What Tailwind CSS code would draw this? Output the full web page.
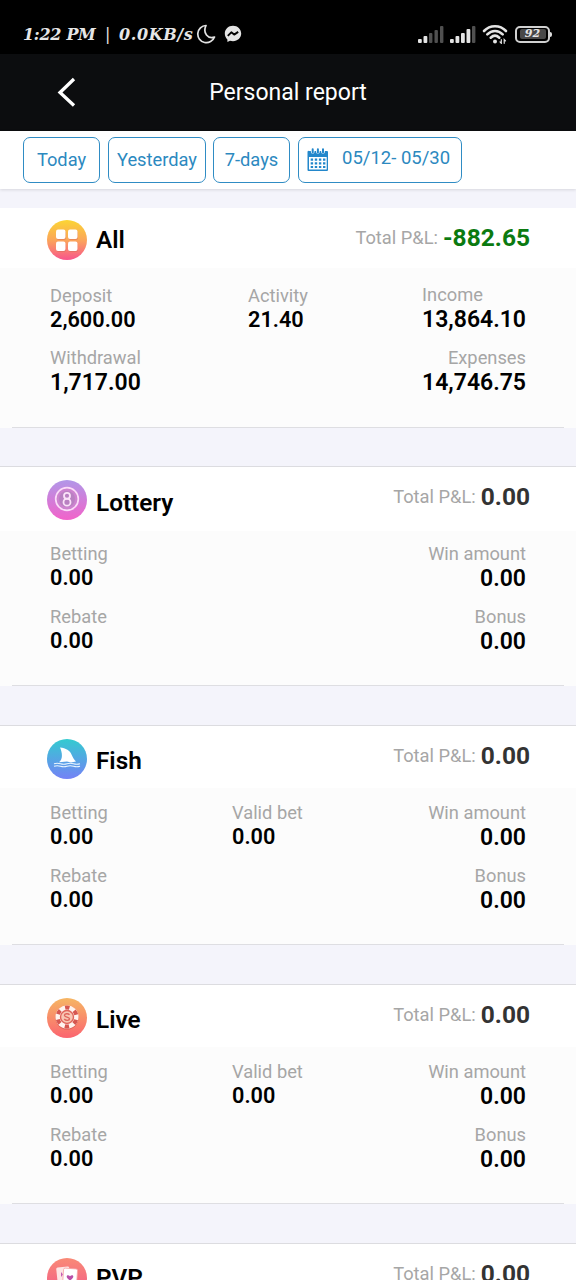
<!DOCTYPE html>
<html lang="en">
<head>
<meta charset="utf-8">
<title>Personal report</title>
<script src="https://cdn.jsdelivr.net/npm/@tailwindcss/browser@4"></script>
</head>
<body class="h-[1280px] w-[576px] overflow-hidden bg-[#f4f4fb] font-['Roboto',sans-serif] text-black">
<div class="flex h-[1280px] flex-col overflow-hidden">

<!-- Status bar -->
<div class="flex h-[54px] shrink-0 items-start bg-black pt-[21px] text-[#e6e6e6]">
  <div class="flex h-[26px] w-full items-center pl-[23px] pr-6">
    <span class="flex w-[172px] items-center whitespace-nowrap pt-px font-['DejaVu_Serif',serif] text-[16px] font-bold italic"><span class="w-[82px] tracking-[-0.300px]">1:22 PM</span><span class="w-[14px] font-normal not-italic">|</span><span class="tracking-[0.600px]">0.0KB/s</span></span>
    <svg class="ml-px" width="20" height="20" viewBox="0 0 20 20" fill="none" stroke="#e2e2e2" stroke-width="1.7" stroke-linejoin="round"><path d="M10 1.5A8.6 8.6 0 1 0 18.5 13C12 15.300 6.500 9 10 1.500Z"/></svg>
    <svg class="ml-[8px]" width="18" height="18" viewBox="0 0 18 18"><path fill="#e4e4e4" d="M9 .8C4.300.8.800 4.200.800 8.600c0 2.400 1 4.400 2.600 5.800v2.700l2.600-1.300c1 .3 2 .4 3 .4 4.700 0 8.200-3.200 8.200-7.600S13.700.8 9 .8Z"/><path fill="none" stroke="#000" stroke-width="1.900" stroke-linejoin="round" d="M3.800 10.800 7.300 7.300 10.200 9.600 14.200 6.900"/></svg>
    <div class="ml-auto flex items-center">
      <svg width="26" height="17" viewBox="0 0 26 17"><g fill="#e4e4e4"><rect x="0" y="13" width="3.800" height="4" rx="1"/><rect x="5.500" y="10" width="3.800" height="7" rx="1"/></g><g fill="#505050"><rect x="11" y="7" width="3.400" height="10" rx="1"/><rect x="16.500" y="4" width="3.400" height="13" rx="1"/><rect x="22" y="0" width="3.400" height="17" rx="1"/></g></svg>
      <svg class="ml-[6px]" width="26" height="17" viewBox="0 0 26 17"><g fill="#e4e4e4"><rect x="0" y="13" width="3.800" height="4" rx="1"/><rect x="5.500" y="10" width="3.800" height="7" rx="1"/><rect x="11" y="7" width="3.800" height="10" rx="1"/><rect x="16.500" y="3" width="3.800" height="14" rx="1"/></g><rect x="22" y="0" width="3.400" height="17" rx="1" fill="#505050"/></svg>
      <svg class="mb-px ml-[6px] mr-px" width="26" height="20" viewBox="0 0 26 20" fill="none" stroke="#e4e4e4" stroke-width="2.600" stroke-linecap="round"><path d="M2 7C8 .6 18 .6 24 7"/><path d="M5.300 10.400C9.800 5.800 16.200 5.800 20.700 10.400"/><path d="M8.700 13.700C11.300 11.300 14.700 11.300 17.300 13.700"/><circle cx="13" cy="17.500" r="2" fill="#e4e4e4" stroke="none"/><path stroke-width="1.200" d="M19.300 15.500v3.800l-1.300-1.400M22.200 19.300v-3.800l1.300 1.400"/></svg>
      <div class="ml-[6px] flex h-[17px] w-[35px] items-center justify-center rounded-[5px] border-2 border-solid border-[#d0d0d0]">
        <span class="flex h-[10px] w-[26px] items-center justify-center rounded-[2px] bg-[#484848] font-['DejaVu_Serif',serif] text-[11px] font-bold italic leading-[10px]">92</span>
      </div>
      <span class="h-[5px] w-[2px] rounded-r-sm bg-[#dedede]"></span>
    </div>
  </div>
</div>

<!-- Title bar -->
<div class="grid h-[77px] shrink-0 grid-cols-[1fr_auto_1fr] items-center bg-[#0c0d0f] text-white">
  <svg class="mb-[2px] ml-[56px]" width="20" height="30" viewBox="0 0 20 30" fill="none" stroke="#fff" stroke-width="3.300"><path d="M18 2 4 15.500 18 28.500"/></svg>
  <h1 class="whitespace-nowrap pt-[2px] text-[23px]">Personal report</h1>
</div>

<!-- Date filters -->
<div class="z-10 flex h-[58px] shrink-0 gap-2 bg-white pl-[23px] pt-[6px] text-[18.300px] text-[#2c89bf] shadow-[0_1px_3px_rgba(0,0,0,0.12)]">
  <button class="h-[46px] w-[77px] rounded-[7px] border border-[#2f8cc4]">Today</button>
  <button class="h-[46px] w-[98px] rounded-[7px] border border-[#2f8cc4]">Yesterday</button>
  <button class="-ml-px h-[46px] w-[77px] rounded-[7px] border border-[#2f8cc4]">7-days</button>
  <button class="flex h-[46px] w-[164px] items-center rounded-[7px] border border-[#2f8cc4] pl-[8px]">
    <svg class="mb-px" width="22" height="23" viewBox="0 0 22 23"><path fill="#2387cb" d="M2 3H20a1 1 0 0 1 1 1V22a1 1 0 0 1-1 1H1.500a1 1 0 0 1-1-1V4A1 1 0 0 1 2 3Z"/><path fill="#fff" d="M2 9H19.700V21.500H2Z"/><path stroke="#fff" stroke-width="3.600" stroke-linecap="round" d="M5.700 2V4M10.900 2V4M16 2V4"/><path stroke="#2387cb" stroke-width="2" stroke-linecap="round" d="M5.700 1.200V4.500M10.900 1.200V4.500M16 1.200V4.500"/><path stroke="#2387cb" stroke-width="2.200" stroke-dasharray="2.400 1.700" d="M3.700 11.600H19M3.700 15.300H19M3.700 19H19"/></svg>
    <span class="ml-[13px] whitespace-nowrap pb-[2px] text-[18.500px]">05/12- 05/30</span>
  </button>
</div>

<!-- All -->
<section class="mt-[19px] flex h-[220px] shrink-0 flex-col bg-[#fcfcfc]">
  <header class="flex h-[60px] items-start bg-white pl-[47px] pr-[46px]">
    <svg class="mt-[12px]" width="40" height="40" viewBox="0 0 40 40"><defs><linearGradient id="gAll" x2="0" y2="1"><stop stop-color="#fbd534"/><stop offset=".5" stop-color="#fba65a"/><stop offset="1" stop-color="#f8558c"/></linearGradient></defs><circle cx="20" cy="20" r="20" fill="url(#gAll)"/><g fill="#d96c5c" opacity=".5"><rect x="9.500" y="10.500" width="9.500" height="9.500" rx="2"/><rect x="21.500" y="10.500" width="9.500" height="9.500" rx="2"/><rect x="9.500" y="22.500" width="9.500" height="9.500" rx="2"/><rect x="21.500" y="22.500" width="9.500" height="9.500" rx="2"/></g><g fill="#fff"><rect x="9" y="9.500" width="9.500" height="9.500" rx="2"/><rect x="21" y="9.500" width="9.500" height="9.500" rx="2"/><rect x="9" y="21.500" width="9.500" height="9.500" rx="2"/><rect x="21" y="21.500" width="9.500" height="9.500" rx="2"/></g></svg>
    <h2 class="ml-[9px] mt-[16px] text-[24.300px] font-semibold leading-[32px]">All</h2>
    <p class="ml-auto mt-[14px] flex gap-[5px] whitespace-nowrap text-[18.300px] leading-[32px] text-[#a6a6a6]">Total P&amp;L: <b class="text-[24.500px] font-bold text-[#0b7a10]">-882.65</b></p>
  </header>
  <div class="mx-3 grid h-[160px] grid-cols-[198px_1fr_auto] grid-rows-[63px_63px] border-b border-[#dedee2] px-[38px] pt-[16px]">
    <div><p class="text-[18.300px] leading-[24px] text-[#a6a6a6]">Deposit</p><p class="text-[21.700px] font-semibold leading-[24px]">2,600.00</p></div>
    <div><p class="text-[18.300px] leading-[24px] text-[#a6a6a6]">Activity</p><p class="text-[21.700px] font-semibold leading-[24px]">21.40</p></div>
    <div><p class="text-[18.300px] leading-[22px] text-[#a6a6a6]">Income</p><p class="pt-[2px] text-[23px] font-semibold leading-[24px]">13,864.10</p></div>
    <div class="col-span-2"><p class="text-[18.300px] leading-[22px] text-[#a6a6a6]">Withdrawal</p><p class="pt-[2px] text-[23px] font-semibold leading-[24px]">1,717.00</p></div>
    <div class="text-right"><p class="text-[18.300px] leading-[22px] text-[#a6a6a6]">Expenses</p><p class="pt-[2px] text-[23px] font-semibold leading-[24px]">14,746.75</p></div>
  </div>
</section>

<!-- Lottery -->
<section class="mt-[38px] flex h-[220px] shrink-0 flex-col border-t border-[#dcdce0] bg-[#fcfcfc]">
  <header class="flex h-[64px] items-start bg-white pl-[47px] pr-[46px]">
    <svg class="mt-[13px]" width="40" height="40" viewBox="0 0 40 40"><defs><linearGradient id="gLot" x2="0" y2="1"><stop stop-color="#b197e8"/><stop offset="1" stop-color="#f263ca"/></linearGradient></defs><circle cx="20" cy="20" r="20" fill="url(#gLot)"/><circle cx="20" cy="19" r="11.300" fill="#cd83cf" stroke="#fbdcf8" stroke-width="1.700"/><circle cx="20" cy="19" r="8" fill="#b981c2"/><g fill="none" stroke="#fbe3f8" stroke-width="1.800"><circle cx="20" cy="15.800" r="3"/><circle cx="20" cy="22.200" r="3.500"/></g></svg>
    <h2 class="ml-[9px] mt-[20px] text-[24.300px] font-semibold leading-[32px]">Lottery</h2>
    <p class="ml-auto mt-[14px] flex gap-[5px] whitespace-nowrap text-[18.300px] leading-[32px] text-[#a6a6a6]">Total P&amp;L: <b class="text-[24.500px] font-bold text-[#333]">0.00</b></p>
  </header>
  <div class="mx-3 grid h-[155px] grid-cols-[182px_1fr_auto] grid-rows-[63px_63px] border-b border-[#dedee2] px-[38px] pt-[11px]">
    <div class="col-span-2"><p class="text-[18.300px] leading-[24px] text-[#a6a6a6]">Betting</p><p class="text-[21.700px] font-semibold leading-[24px]">0.00</p></div>
    <div class="text-right"><p class="text-[18.300px] leading-[24px] text-[#a6a6a6]">Win amount</p><p class="pt-px text-[23px] font-semibold leading-[24px]">0.00</p></div>
    <div class="col-span-2"><p class="text-[18.300px] leading-[24px] text-[#a6a6a6]">Rebate</p><p class="text-[21.700px] font-semibold leading-[24px]">0.00</p></div>
    <div class="text-right"><p class="text-[18.300px] leading-[24px] text-[#a6a6a6]">Bonus</p><p class="pt-px text-[23px] font-semibold leading-[24px]">0.00</p></div>
  </div>
</section>

<!-- Fish -->
<section class="mt-[39px] flex h-[220px] shrink-0 flex-col border-t border-[#dcdce0] bg-[#fcfcfc]">
  <header class="flex h-[62px] items-start bg-white pl-[47px] pr-[46px]">
    <svg class="mt-[13px]" width="40" height="40" viewBox="0 0 40 40"><defs><linearGradient id="gFish" x2="0" y2="1"><stop stop-color="#33cbd0"/><stop offset="1" stop-color="#7582f6"/></linearGradient></defs><circle cx="20" cy="20" r="20" fill="url(#gFish)"/><path fill="#fff" d="M13 8.500C19 9 23 11.500 24.500 15.500 25.500 18 27 20.500 29 22.600L24 23.600 20 22.600 12 23.300C16 20.500 15.500 14 13 8.500Z"/><path d="M7 24.800q3.200-1 6.500 0t6.500 0 6.500 0 6.500 0M7 27.300q3.200-1 6.500 0t6.500 0 6.500 0 6.500 0" fill="none" stroke="#e9f6ff" stroke-width="1.100"/></svg>
    <h2 class="ml-[9px] mt-[19px] text-[24.300px] font-semibold leading-[32px]">Fish</h2>
    <p class="ml-auto mt-[14px] flex gap-[5px] whitespace-nowrap text-[18.300px] leading-[32px] text-[#a6a6a6]">Total P&amp;L: <b class="text-[24.500px] font-bold text-[#333]">0.00</b></p>
  </header>
  <div class="mx-3 grid h-[157px] grid-cols-[182px_1fr_auto] grid-rows-[63px_63px] border-b border-[#dedee2] px-[38px] pt-[13px]">
    <div><p class="text-[18.300px] leading-[24px] text-[#a6a6a6]">Betting</p><p class="text-[21.700px] font-semibold leading-[24px]">0.00</p></div>
    <div><p class="text-[18.300px] leading-[24px] text-[#a6a6a6]">Valid bet</p><p class="text-[21.700px] font-semibold leading-[24px]">0.00</p></div>
    <div class="text-right"><p class="text-[18.300px] leading-[24px] text-[#a6a6a6]">Win amount</p><p class="pt-px text-[23px] font-semibold leading-[24px]">0.00</p></div>
    <div class="col-span-2"><p class="text-[18.300px] leading-[24px] text-[#a6a6a6]">Rebate</p><p class="text-[21.700px] font-semibold leading-[24px]">0.00</p></div>
    <div class="text-right"><p class="text-[18.300px] leading-[24px] text-[#a6a6a6]">Bonus</p><p class="pt-px text-[23px] font-semibold leading-[24px]">0.00</p></div>
  </div>
</section>

<!-- Live -->
<section class="mt-[39px] flex h-[220px] shrink-0 flex-col border-t border-[#dcdce0] bg-[#fcfcfc]">
  <header class="flex h-[62px] items-start bg-white pl-[47px] pr-[46px]">
    <svg class="mt-[13px]" width="40" height="40" viewBox="0 0 40 40"><defs><linearGradient id="gLive" x2="0" y2="1"><stop stop-color="#f6b664"/><stop offset="1" stop-color="#fb6470"/></linearGradient></defs><circle cx="20" cy="20" r="20" fill="url(#gLive)"/><circle cx="20" cy="20" r="11.500" fill="#c9544c" opacity=".6"/><circle cx="20" cy="19" r="11.500" fill="#fff3ee"/><circle cx="20" cy="19" r="9.500" fill="none" stroke="#d65750" stroke-width="4" stroke-dasharray="4.400 5.548" stroke-dashoffset="-2.770"/><circle cx="20" cy="19" r="6.500" fill="#f8c7b4" stroke="#df655b" stroke-width="1.400"/><path fill="none" stroke="#df655b" stroke-width="1.400" d="M22.500 16.800C21 15 17.300 15.600 17.500 17.500S22.600 18.800 22.500 20.900 18.600 22.700 17.200 21"/></svg>
    <h2 class="ml-[9px] mt-[19px] text-[24.300px] font-semibold leading-[32px]">Live</h2>
    <p class="ml-auto mt-[14px] flex gap-[5px] whitespace-nowrap text-[18.300px] leading-[32px] text-[#a6a6a6]">Total P&amp;L: <b class="text-[24.500px] font-bold text-[#333]">0.00</b></p>
  </header>
  <div class="mx-3 grid h-[157px] grid-cols-[182px_1fr_auto] grid-rows-[63px_63px] border-b border-[#dedee2] px-[38px] pt-[13px]">
    <div><p class="text-[18.300px] leading-[24px] text-[#a6a6a6]">Betting</p><p class="text-[21.700px] font-semibold leading-[24px]">0.00</p></div>
    <div><p class="text-[18.300px] leading-[24px] text-[#a6a6a6]">Valid bet</p><p class="text-[21.700px] font-semibold leading-[24px]">0.00</p></div>
    <div class="text-right"><p class="text-[18.300px] leading-[24px] text-[#a6a6a6]">Win amount</p><p class="pt-px text-[23px] font-semibold leading-[24px]">0.00</p></div>
    <div class="col-span-2"><p class="text-[18.300px] leading-[24px] text-[#a6a6a6]">Rebate</p><p class="text-[21.700px] font-semibold leading-[24px]">0.00</p></div>
    <div class="text-right"><p class="text-[18.300px] leading-[24px] text-[#a6a6a6]">Bonus</p><p class="pt-px text-[23px] font-semibold leading-[24px]">0.00</p></div>
  </div>
</section>

<!-- PVP, cut off by the bottom of the screen -->
<section class="mt-[39px] flex h-[220px] shrink-0 flex-col border-t border-[#dcdce0] bg-[#fcfcfc]">
  <header class="flex h-[62px] items-start bg-white pl-[47px] pr-[46px]">
    <svg class="mt-[14px]" width="40" height="40" viewBox="0 0 40 40"><defs><linearGradient id="gPvp" x2="0" y2="1"><stop stop-color="#f98a76"/><stop offset="1" stop-color="#f2568c"/></linearGradient></defs><circle cx="20" cy="20" r="20" fill="url(#gPvp)"/><rect x="10" y="9" width="13" height="19" rx="1.500" fill="#fde5e5" transform="rotate(-6 16 18)"/><path fill="#c45bb5" d="M14 14l2 2.500-2 2.500z"/><rect x="16" y="10.500" width="14" height="19" rx="1.500" fill="#fff" stroke="#f6a3a4" stroke-width=".8" transform="rotate(4 23 20)"/><path fill="#b84fa9" d="M23 22.500c-6-4-2.500-6.800 0-4.300 2.500-2.500 6 .3 0 4.300Z"/></svg>
    <h2 class="ml-[9px] mt-[18px] text-[24.300px] font-semibold leading-[32px]">PVP</h2>
    <p class="ml-auto mt-[14px] flex gap-[5px] whitespace-nowrap text-[18.300px] leading-[32px] text-[#a6a6a6]">Total P&amp;L: <b class="text-[24.500px] font-bold text-[#333]">0.00</b></p>
  </header>
</section>

</div>
</body>
</html>
